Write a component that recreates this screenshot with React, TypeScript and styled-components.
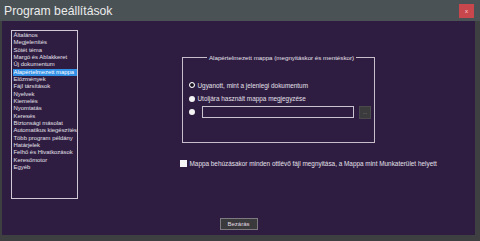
import styled, { createGlobalStyle } from 'styled-components';

const GlobalStyle = createGlobalStyle`
  html, body {
    margin: 0;
    padding: 0;
    background: #3d3f41;
  }
  body {
    width: 480px;
    height: 241px;
    overflow: hidden;
    font-family: "Liberation Sans", Arial, sans-serif;
  }
`;

const categories = [
  'Általános',
  'Megjelenítés',
  'Sötét téma',
  'Margó és Ablakkeret',
  'Új dokumentum',
  'Alapértelmezett mappa',
  'Előzmények',
  'Fájl társítások',
  'Nyelvek',
  'Kiemelés',
  'Nyomtatás',
  'Keresés',
  'Biztonsági másolat',
  'Automatikus kiegészítés',
  'Több program példány',
  'Határjelek',
  'Felhő és Hivatkozások',
  'Keresőmotor',
  'Egyéb',
];

function App() {
  return (
    <>
      <GlobalStyle />
      <Window>
        <TitleBar>
          <Title>Program beállítások</Title>
          <CloseButton>x</CloseButton>
        </TitleBar>
        <Body>
          <Content>
            <CategoryList>
              {categories.map((name) => (
                <CategoryItem key={name} $selected={name === 'Alapértelmezett mappa'}>
                  {name}
                </CategoryItem>
              ))}
            </CategoryList>
            <Panel>
              <GroupBox>
                <Legend>Alapértelmezett mappa (megnyitáskor és mentéskor)</Legend>
                <RadioRow>
                  <Radio $checked />
                  <Label>Ugyanott, mint a jelenlegi dokumentum</Label>
                </RadioRow>
                <RadioRow>
                  <Radio />
                  <Label>Utoljára használt mappa megjegyzése</Label>
                </RadioRow>
                <RadioRow>
                  <Radio />
                  <PathInput />
                  <BrowseButton>...</BrowseButton>
                </RadioRow>
              </GroupBox>
              <CheckRow>
                <CheckBox />
                <Label>Mappa behúzásakor minden ottlévő fájl megnyitása, a Mappa mint Munkaterület helyett</Label>
              </CheckRow>
            </Panel>
          </Content>
          <Footer>
            <DialogButton>Bezárás</DialogButton>
          </Footer>
        </Body>
      </Window>
    </>
  );
}

export default App;

const Window = styled.div`
  width: 480px;
  height: 241px;
  display: flex;
  flex-direction: column;
  background: #3d3f41;
`;

const TitleBar = styled.div`
  height: 21px;
  display: flex;
  align-items: center;
  justify-content: space-between;
  padding: 0 6px 0 4px;
  background: #4a5256;
`;

const Title = styled.div`
  color: #ececec;
  font-size: 12.2px;
  margin-top: 1px;
`;

const CloseButton = styled.div`
  width: 15px;
  height: 14px;
  display: flex;
  align-items: center;
  justify-content: center;
  background: #c8474c;
  color: #ffd8d8;
  font-size: 6px;
  line-height: 1;
`;

const Body = styled.div`
  height: 214px;
  margin: 0 5px 0 2px;
  padding: 9px 0 0 9px;
  box-sizing: border-box;
  background: #2f1d41;
  display: flex;
  flex-direction: column;
`;

const Content = styled.div`
  display: flex;
`;

const CategoryList = styled.div`
  width: 67px;
  height: 169px;
  box-sizing: border-box;
  border: 1px solid #cfcad6;
  padding: 1px 0 0 1px;
  overflow: hidden;
`;

const CategoryItem = styled.div<{ $selected?: boolean }>`
  font-size: 5.9px;
  line-height: 7.33px;
  height: 7.33px;
  padding-left: 0.5px;
  white-space: nowrap;
  color: ${({ $selected }) => ($selected ? '#ffffff' : '#e4e0ea')};
  background: ${({ $selected }) => ($selected ? '#3290e6' : 'transparent')};
`;

const Panel = styled.div`
  flex: 1;
  display: flex;
  flex-direction: column;
  align-items: center;
  padding-top: 24px;
`;

const GroupBox = styled.fieldset`
  width: 193px;
  height: 89px;
  box-sizing: border-box;
  margin: 0 0 0 4px;
  padding: 21px 0 0 6px;
  border: 1px solid #c4bfcb;
  display: flex;
  flex-direction: column;
  gap: 7.5px;
`;

const Legend = styled.legend`
  margin: 0 auto;
  padding: 0 2px;
  font-size: 6.2px;
  color: #e4e0ea;
  white-space: nowrap;
`;

const RadioRow = styled.div`
  display: flex;
  align-items: center;
  height: 6px;
`;

const Radio = styled.span<{ $checked?: boolean }>`
  width: 6px;
  height: 6px;
  border-radius: 50%;
  box-sizing: border-box;
  background: #f4f4f4;
  border: ${({ $checked }) => ($checked ? '1.3px solid #f4f4f4' : 'none')};
  box-shadow: ${({ $checked }) => ($checked ? 'inset 0 0 0 0.8px #2f1d41, inset 0 0 0 5px #111' : 'none')};
  flex-shrink: 0;
`;

const Label = styled.span`
  margin-left: 2.5px;
  font-size: 6.4px;
  color: #e4e0ea;
  white-space: nowrap;
`;

const PathInput = styled.div`
  width: 152px;
  height: 12px;
  box-sizing: border-box;
  margin-left: 7px;
  border: 1px solid #c9c4cf;
`;

const BrowseButton = styled.div`
  width: 12px;
  height: 13px;
  margin-left: 5px;
  background: #3b3a3d;
  border: 1px solid #4a4a4d;
  box-sizing: border-box;
  color: #9a9a9a;
  font-size: 5px;
  display: flex;
  align-items: center;
  justify-content: center;
`;

const CheckRow = styled.div`
  display: flex;
  align-items: center;
  align-self: flex-start;
  margin: 17px 0 0 102px;
`;

const CheckBox = styled.span`
  width: 7px;
  height: 7px;
  background: #f6f6f6;
  flex-shrink: 0;
`;

const Footer = styled.div`
  display: flex;
  justify-content: center;
  padding: 19px 9px 0 0;
`;

const DialogButton = styled.div`
  width: 38px;
  height: 12px;
  box-sizing: border-box;
  background: #3a393c;
  border: 1px solid #7d7a82;
  color: #e0dde4;
  font-size: 6px;
  display: flex;
  align-items: center;
  justify-content: center;
`;
